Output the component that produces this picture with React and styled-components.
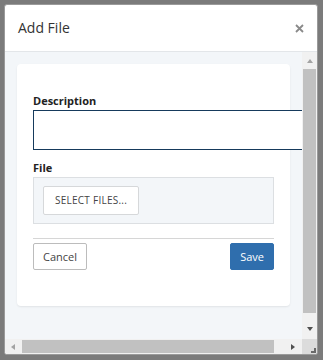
import React from "react";
import styled, { createGlobalStyle } from "styled-components";

const Global = createGlobalStyle`
  html, body { margin: 0; padding: 0; }
  body {
    background: #7b7b7b;
    font-family: "Open Sans", "Liberation Sans", sans-serif;
    width: 323px;
    height: 360px;
    overflow: hidden;
  }
  * { box-sizing: border-box; }
`;

const Overlay = styled.div`
  padding: 4px 5px 5px 4px;
  height: 360px;
`;

const Modal = styled.div`
  width: 314px;
  height: 351px;
  background: #fff;
  border: 1px solid #9a9a9a;
  border-radius: 3px;
  display: flex;
  flex-direction: column;
  overflow: hidden;
`;

const Header = styled.div`
  flex: none;
  height: 47px;
  display: flex;
  align-items: center;
  justify-content: space-between;
  padding: 0 13px 0 13px;
  border-bottom: 1px solid #e3e6e9;
`;

const Title = styled.h4`
  margin: 0;
  font-size: 14px;
  font-weight: 400;
  color: #333;
  line-height: 20px;
`;

const Close = styled.button`
  border: 0;
  background: none;
  padding: 0;
  width: 9px;
  height: 9px;
  display: flex;
  cursor: pointer;
`;

/* scroll frame: viewport + scrollbars */
const ScrollFrame = styled.div`
  flex: 1;
  min-height: 0;
  display: grid;
  grid-template-columns: 1fr 15px;
  grid-template-rows: 1fr 15px;
`;

const Viewport = styled.div`
  overflow: hidden;
  background: #f3f6f9;
  padding: 12px;
`;

const Bar = styled.div`
  display: flex;
  flex-direction: ${(p) => (p.$vertical ? "column" : "row")};
  background: #f1f1f1;
`;

const ArrowBtn = styled.div`
  flex: none;
  width: 15px;
  height: 15px;
  display: flex;
  align-items: ${(p) => p.$align || "center"};
  justify-content: ${(p) => p.$justify || "center"};
  padding: ${(p) => p.$pad || "0"};
`;

const Tri = styled.span`
  width: 0;
  height: 0;
  ${(p) =>
    p.$dir === "up"
      ? `border-left: 3.5px solid transparent; border-right: 3.5px solid transparent; border-bottom: 4px solid ${p.$color};`
      : p.$dir === "down"
      ? `border-left: 3.5px solid transparent; border-right: 3.5px solid transparent; border-top: 4px solid ${p.$color};`
      : p.$dir === "left"
      ? `border-top: 3.5px solid transparent; border-bottom: 3.5px solid transparent; border-right: 4px solid ${p.$color};`
      : `border-top: 3.5px solid transparent; border-bottom: 3.5px solid transparent; border-left: 4px solid ${p.$color};`}
`;

const Track = styled.div`
  flex: 1;
  display: flex;
  flex-direction: ${(p) => (p.$vertical ? "column" : "row")};
  padding: ${(p) => (p.$vertical ? "2px 1px 0 1px" : "1px 0 1px 2px")};
`;

const Thumb = styled.div`
  flex: none;
  background: #c1c1c1;
  ${(p) => (p.$vertical ? `height: ${p.$size}px;` : `width: ${p.$size}px;`)}
`;

const Corner = styled.div`
  background: #dcdcdc;
  display: flex;
  align-items: flex-end;
  justify-content: flex-end;
  padding: 0 1px 1px 0;
`;

const Grip = styled.span`
  width: 5px;
  height: 5px;
  border-right: 2px solid #6a6a6a;
  border-bottom: 2px solid #6a6a6a;
`;

const Card = styled.div`
  width: 273px;
  background: #fff;
  border-radius: 4px;
  box-shadow: 0 1px 2px rgba(0, 0, 0, 0.08);
  padding: 29px 16px 36px 16px;
`;

const Label = styled.label`
  display: block;
  font-size: 11px;
  line-height: 15px;
  font-weight: 700;
  color: #222;
  margin-bottom: 2px;
`;

const TextInput = styled.input`
  display: block;
  width: 288px;
  height: 40px;
  border: 1px solid #163a5c;
  background: #fff;
  outline: none;
  padding: 0 8px;
  font: inherit;
  margin-bottom: 10px;
`;

const DropZone = styled.div`
  border: 1px solid #dcdfe2;
  background: #f3f6f9;
  padding: 8px 9px 8px 9px;
`;

const Button = styled.button`
  font-family: "Open Sans", "Liberation Sans", sans-serif;
  font-size: ${(p) => (p.$small ? "10px" : "11px")};
  letter-spacing: ${(p) => (p.$small ? "0.25px" : "0")};
  line-height: 15px;
  padding: ${(p) => (p.$small ? "6px 11px" : "5px 9px")};
  border-radius: 2px;
  border: 1px solid ${(p) => (p.$primary ? "#2f6ead" : p.$small ? "#d6d8da" : "#bcbcbc")};
  background: ${(p) => (p.$primary ? "#2f6ead" : "#fff")};
  color: ${(p) => (p.$primary ? "#fff" : "#444")};
  text-transform: ${(p) => (p.$small ? "uppercase" : "none")};
  cursor: pointer;
`;

const Divider = styled.hr`
  border: 0;
  border-top: 1px solid #d6d6d6;
  margin: 14px 0 4px 0;
`;

const Actions = styled.div`
  display: flex;
  justify-content: space-between;
`;

export default function App() {
  return (
    <>
      <Global />
      <Overlay>
        <Modal>
          <Header>
            <Title>Add File</Title>
            <Close aria-label="Close">
              <svg width="9" height="9" viewBox="0 0 9 9">
                <path d="M1 1L8 8M8 1L1 8" stroke="#8a8a8a" strokeWidth="1.8" />
              </svg>
            </Close>
          </Header>
          <ScrollFrame>
            <Viewport>
              <Card>
                <Label>Description</Label>
                <TextInput />
                <Label>File</Label>
                <DropZone>
                  <Button $small>Select files...</Button>
                </DropZone>
                <Divider />
                <Actions>
                  <Button>Cancel</Button>
                  <Button $primary>Save</Button>
                </Actions>
              </Card>
            </Viewport>
            <Bar $vertical>
              <ArrowBtn $align="flex-start" $pad="7px 0 0 0">
                <Tri $dir="up" $color="#a3a3a3" />
              </ArrowBtn>
              <Track $vertical>
                <Thumb $vertical $size={244} />
              </Track>
              <ArrowBtn $align="flex-start" $pad="3px 0 0 0">
                <Tri $dir="down" $color="#505050" />
              </ArrowBtn>
            </Bar>
            <Bar>
              <ArrowBtn $justify="flex-start" $pad="0 0 0 6px">
                <Tri $dir="left" $color="#a3a3a3" />
              </ArrowBtn>
              <Track>
                <Thumb $size={252} />
              </Track>
              <ArrowBtn $justify="flex-start" $pad="0 0 0 4px">
                <Tri $dir="right" $color="#505050" />
              </ArrowBtn>
            </Bar>
            <Corner>
              <Grip />
            </Corner>
          </ScrollFrame>
        </Modal>
      </Overlay>
    </>
  );
}
